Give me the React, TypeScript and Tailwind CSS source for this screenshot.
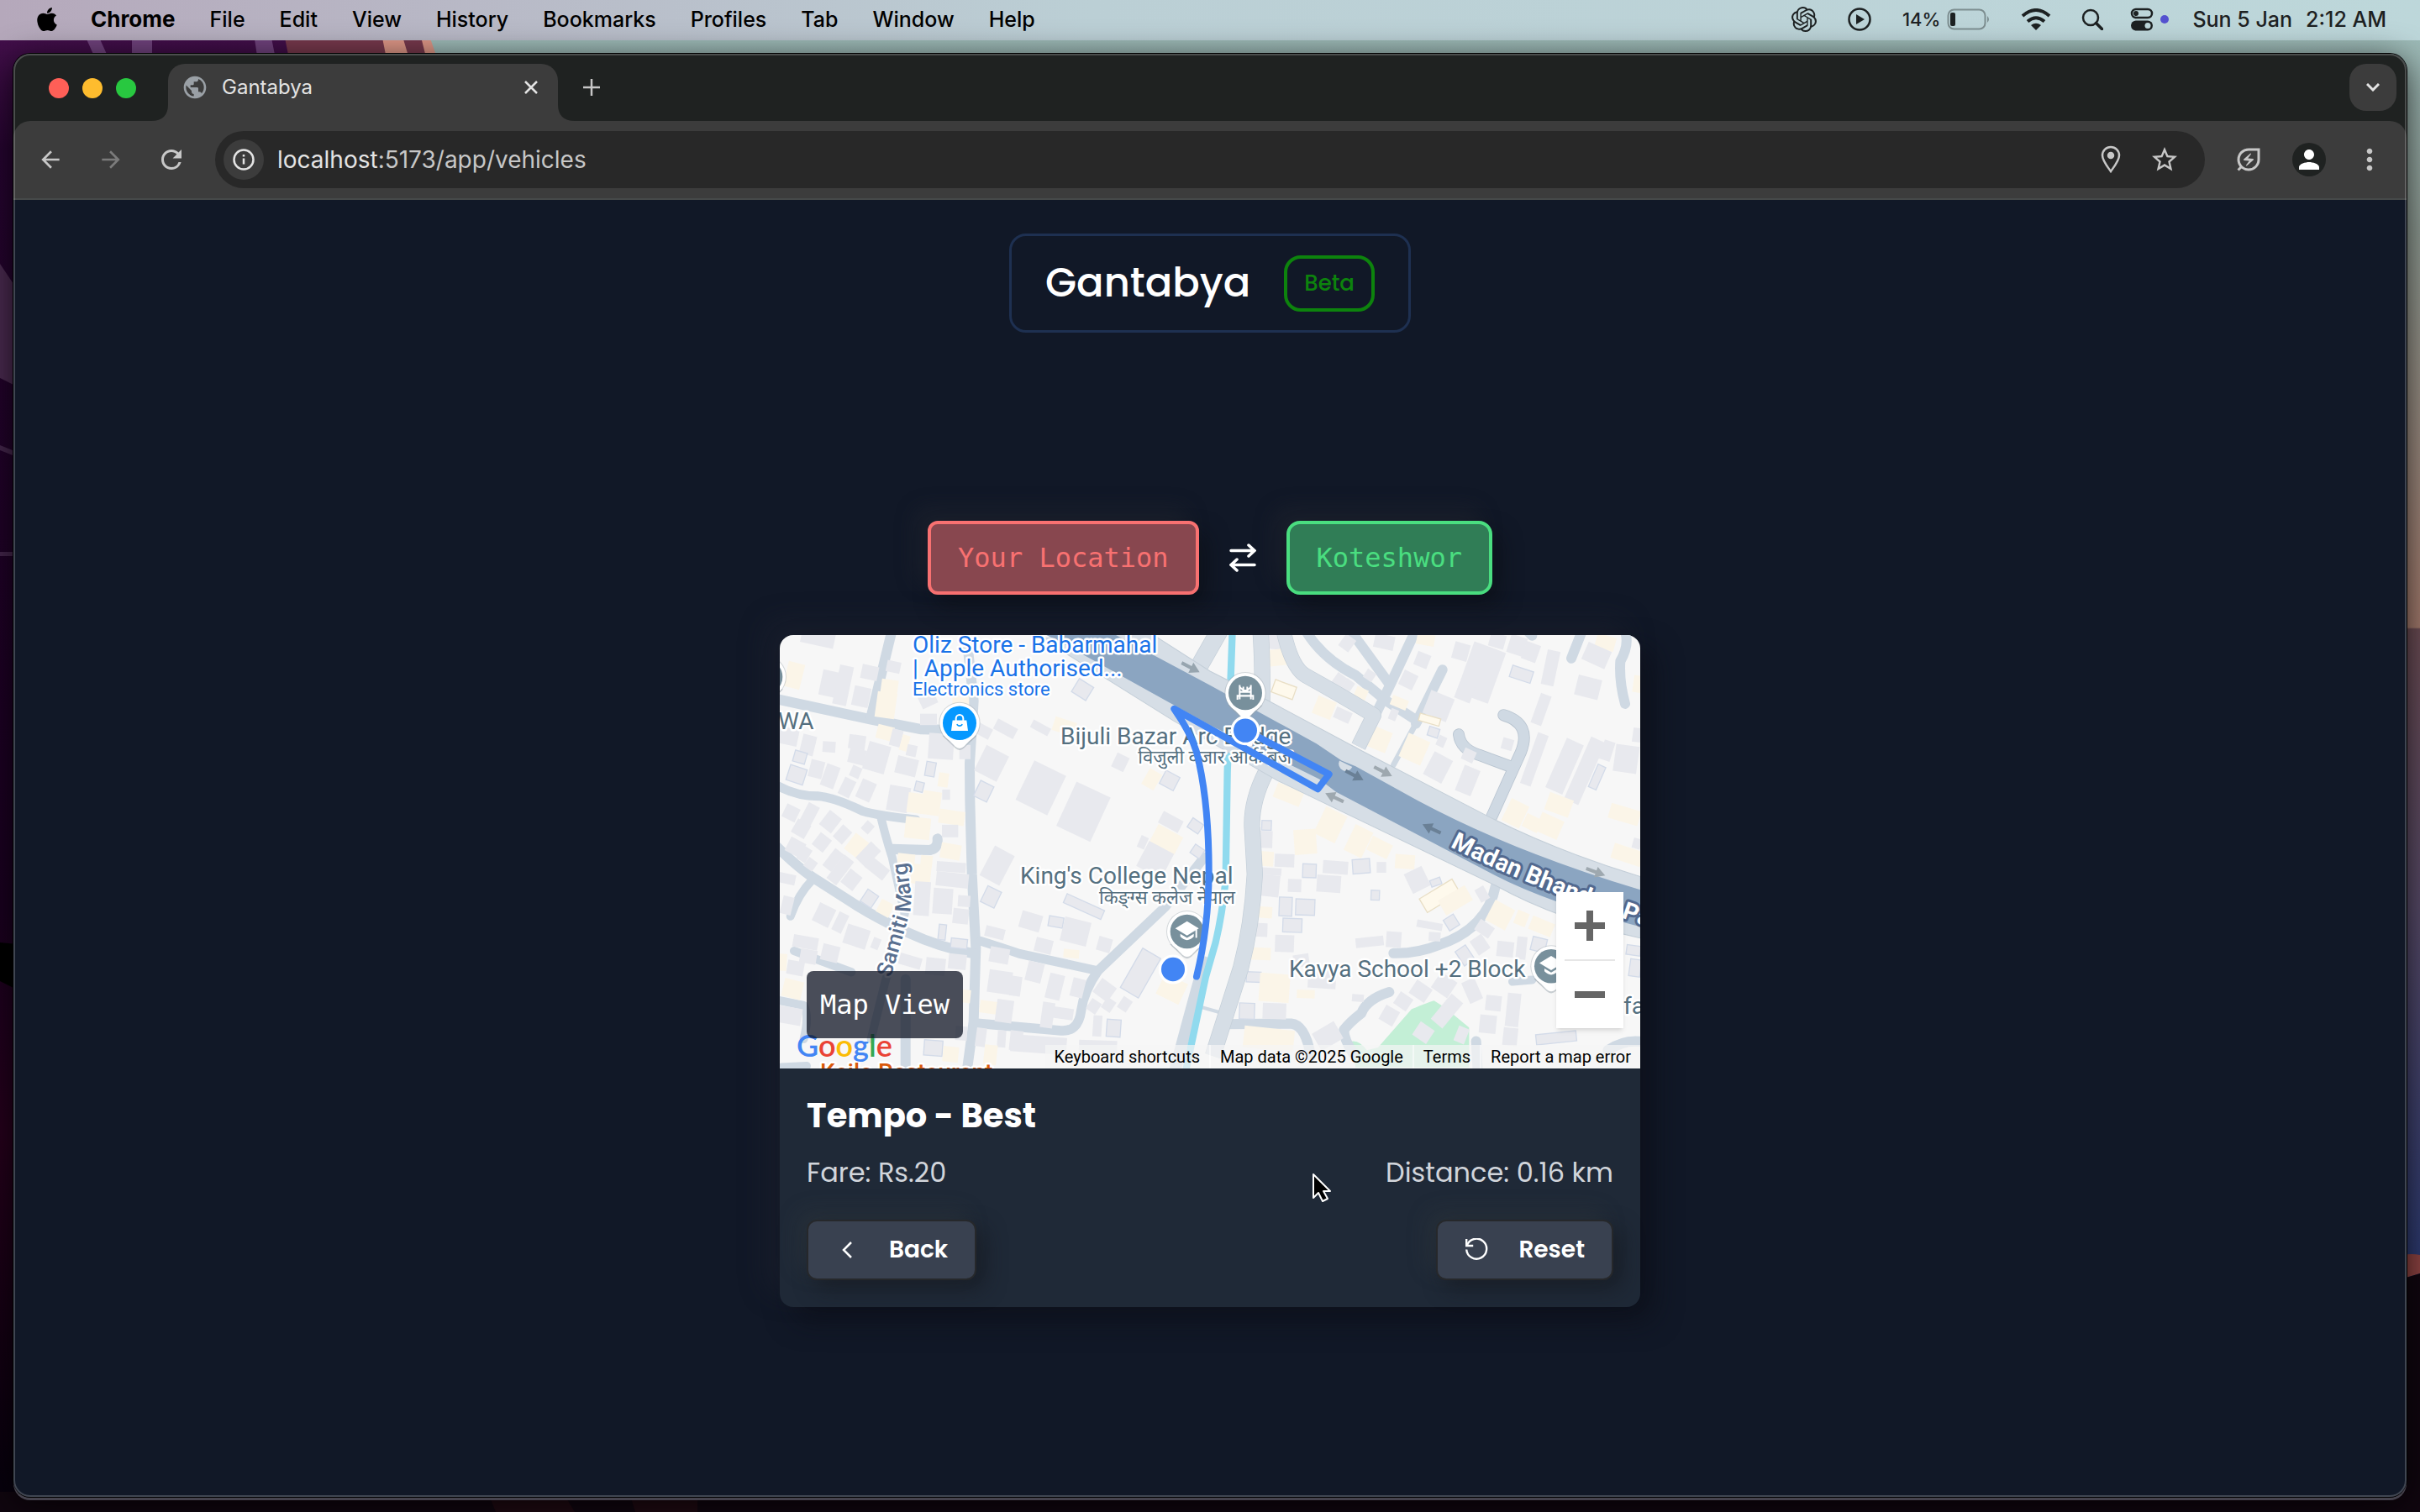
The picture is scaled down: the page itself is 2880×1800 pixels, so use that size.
import type { ReactNode } from 'react';
import { FaApple } from 'react-icons/fa';
import {
  MdArrowBack,
  MdArrowForward,
  MdMoreVert,
  MdOutlineEnergySavingsLeaf,
  MdPerson,
  MdPublic,
  MdRefresh,
  MdStarBorder,
} from 'react-icons/md';
import { SiOpenai } from 'react-icons/si';

const MENUS = ['File', 'Edit', 'View', 'History', 'Bookmarks', 'Profiles', 'Tab', 'Window', 'Help'];

// kind, centre x, centre y, width, height, rotation
type Building = ['g' | 'y' | 'o' | 'b', number, number, number, number, number];

const WEST: Building[] = [
  ['g', 160, 30, 120, 50, 12], ['g', 345, 150, 60, 50, 12], ['y', 75, 160, 60, 90, 14], ['g', 205, 190, 70, 90, 12],
  ['g', 250, 195, 50, 140, 12], ['g', 315, 235, 60, 70, 12], ['g', 430, 130, 50, 40, 12], ['y', 415, 205, 60, 60, 8],
  ['y', 403, 265, 70, 90, 8], ['g', 550, 240, 60, 60, -25], ['y', 670, 255, 60, 40, 0], ['g', 555, 315, 60, 40, 0],
  ['g', 600, 410, 90, 90, 4], ['g', 685, 430, 40, 50, 0], ['g', 750, 355, 60, 40, 28], ['g', 830, 348, 80, 40, 28],
  ['g', 955, 345, 70, 30, 28], ['y', 1040, 340, 80, 50, 18], ['o', 1105, 210, 60, 54, 32], ['g', 780, 470, 90, 100, 27],
  ['g', 55, 375, 70, 60, 12], ['g', 125, 405, 50, 70, 14], ['g', 200, 412, 46, 38, 4], ['y', 400, 362, 60, 50, 14],
  ['g', 440, 380, 40, 60, 14], ['y', 470, 398, 28, 56, 16], ['g', 300, 395, 60, 50, 8], ['g', 370, 450, 80, 100, 16],
  ['g', 300, 445, 60, 54, 14], ['g', 495, 425, 36, 40, 12], ['g', 477, 480, 76, 62, 14], ['o', 562, 490, 34, 50, 10],
  ['o', 522, 552, 30, 34, 14], ['o', 96, 448, 44, 40, 16], ['o', 84, 510, 62, 56, 18], ['g', 155, 490, 50, 62, 14],
  ['g', 204, 515, 50, 80, 20], ['g', 264, 555, 44, 64, 26], ['g', 295, 500, 36, 40, 24], ['g', 332, 565, 54, 70, 24],
  ['g', 448, 595, 76, 90, 10], ['y', 510, 610, 60, 70, 8], ['y', 565, 610, 66, 84, 8], ['g', 618, 580, 28, 36, 0],
  ['y', 608, 528, 36, 50, 8], ['y', 638, 660, 92, 50, 8], ['y', 516, 698, 90, 76, 6], ['g', 632, 708, 58, 44, 0],
  ['o', 752, 568, 52, 60, 26], ['g', 956, 556, 126, 154, 26], ['g', 1108, 640, 134, 172, 25], ['g', 1240, 466, 48, 54, 26],
  ['y', 1352, 526, 50, 64, 30], ['o', 1416, 530, 56, 52, 28], ['g', 1420, 676, 80, 46, 28], ['y', 1404, 738, 100, 70, 28],
  ['g', 1320, 748, 28, 44, 24], ['o', 1508, 690, 46, 38, 34], ['o', 1515, 780, 40, 36, 34], ['g', 1364, 810, 100, 100, 28],
  ['g', 800, 830, 80, 118, 28], ['o', 778, 940, 54, 62, 26], ['g', 64, 644, 52, 50, 26], ['g', 130, 650, 44, 76, 28],
  ['g', 100, 700, 54, 54, 30], ['g', 205, 675, 54, 64, 38], ['g', 248, 720, 44, 56, 42], ['g', 174, 748, 50, 54, 38],
  ['g', 338, 695, 34, 38, 42], ['y', 298, 760, 60, 70, 38], ['g', 80, 765, 60, 54, 28], ['g', 112, 790, 36, 52, 32],
  ['g', 134, 825, 38, 38, 36], ['g', 215, 810, 40, 76, 38], ['g', 240, 845, 44, 104, 38], ['g', 280, 880, 54, 60, 38],
  ['g', 340, 790, 50, 80, 44], ['g', 372, 840, 80, 46, 38], ['g', 50, 876, 60, 36, 12], ['g', 50, 970, 40, 64, 14],
  ['y', 474, 820, 62, 64, 6], ['y', 528, 860, 70, 70, 6], ['y', 548, 814, 42, 40, 6], ['y', 634, 780, 72, 54, 10],
  ['g', 636, 835, 104, 36, 4], ['g', 640, 880, 116, 50, 6], ['g', 606, 955, 70, 90, 4], ['g', 532, 946, 56, 120, 4],
  ['g', 682, 955, 44, 40, 4], ['g', 670, 1008, 56, 54, 6], ['o', 344, 946, 46, 50, 34], ['y', 400, 980, 50, 50, 28],
  ['g', 182, 1004, 64, 70, 26], ['g', 240, 1030, 38, 70, 26], ['g', 298, 1080, 84, 70, 18], ['g', 367, 1104, 28, 40, 22],
  ['g', 116, 1100, 90, 44, 10], ['g', 204, 1138, 62, 58, 14], ['g', 126, 1150, 60, 50, 10], ['g', 80, 1190, 60, 50, 10],
  ['o', 604, 1064, 26, 54, 6], ['o', 664, 1104, 58, 34, 6], ['g', 490, 1166, 80, 40, 16], ['g', 580, 1185, 70, 60, 6],
  ['g', 658, 1168, 64, 54, 6], ['y', 70, 1264, 70, 64, 14], ['g', 60, 1358, 84, 60, 10], ['g', 808, 1146, 70, 54, 10],
  ['g', 792, 1066, 70, 38, 14], ['g', 920, 1026, 76, 60, 16], ['o', 1010, 1028, 52, 36, 10], ['g', 1080, 1062, 96, 86, 14],
  ['o', 1110, 974, 146, 34, 24], ['g', 966, 1112, 62, 50, 14], ['g', 1183, 1108, 50, 50, 16], ['y', 1065, 1140, 56, 30, 6],
  ['g', 934, 1204, 58, 70, 14], ['g', 810, 1240, 84, 80, 8], ['g', 866, 1254, 40, 70, 8], ['g', 1006, 1256, 54, 90, 14],
  ['g', 1088, 1260, 46, 66, 14], ['y', 768, 1328, 60, 44, 8], ['g', 826, 1342, 60, 80, 8], ['g', 980, 1356, 44, 90, 8],
  ['g', 1036, 1350, 72, 40, 8], ['o', 1312, 1208, 74, 160, 30], ['g', 1184, 1268, 64, 60, 36], ['y', 1424, 1264, 90, 80, 26],
  ['g', 1145, 1325, 40, 44, 34], ['g', 1198, 1320, 38, 44, 34], ['g', 1256, 1318, 38, 46, 34], ['g', 1158, 1394, 32, 74, 4],
  ['o', 1216, 1402, 50, 60, 4], ['g', 742, 1434, 36, 66, 8], ['g', 816, 1440, 30, 60, 4], ['g', 868, 1446, 46, 70, 6],
  ['g', 948, 1460, 200, 60, 4], ['y', 776, 1496, 46, 70, 6], ['o', 572, 1472, 66, 54, 4], ['y', 634, 1494, 56, 54, 6],
  ['y', 690, 1290, 30, 46, 6], ['g', 672, 1420, 42, 50, 4], ['g', 1160, 1470, 136, 50, 2], ['y', 34, 1170, 30, 60, 4],
];

const EAST: Building[] = [
  ['g', 222, 42, 66, 50, 6], ['y', 232, 98, 78, 58, -6], ['b', 264, 210, 80, 46, 20], ['y', 408, 274, 70, 66, 22],
  ['g', 474, 300, 60, 40, 24], ['g', 460, 180, 40, 50, 36], ['g', 490, 200, 34, 50, 36], ['y', 538, 226, 44, 44, 24],
  ['g', 490, 46, 44, 50, 36], ['g', 622, 42, 72, 50, 12], ['y', 770, 34, 64, 40, 10], ['g', 758, 106, 50, 50, 22],
  ['g', 708, 176, 54, 56, 26], ['g', 570, 160, 36, 34, 34], ['y', 676, 256, 60, 36, 22], ['g', 655, 298, 28, 40, 22],
  ['g', 816, 268, 90, 86, 22], ['b', 784, 316, 76, 26, 16], ['o', 798, 360, 38, 32, 18], ['g', 826, 392, 30, 38, 24],
  ['g', 896, 76, 56, 60, 16], ['g', 968, 150, 120, 190, 20], ['g', 910, 220, 60, 60, 22], ['o', 1112, 156, 78, 42, 18],
  ['g', 1026, 38, 56, 50, 16], ['g', 1096, 54, 60, 66, 18], ['g', 1146, 78, 54, 64, 20], ['g', 1216, 134, 46, 124, 12],
  ['g', 1182, 280, 40, 110, 20], ['y', 1412, 44, 70, 50, 16], ['g', 1380, 90, 90, 66, 24], ['g', 1350, 202, 86, 72, 14],
  ['y', 1526, 190, 30, 60, 8], ['y', 606, 386, 70, 76, 22], ['y', 730, 420, 84, 90, 24], ['g', 814, 484, 74, 90, 28],
  ['g', 920, 530, 60, 96, 22], ['g', 924, 442, 44, 42, 24], ['g', 1062, 402, 40, 40, 16], ['g', 1158, 456, 40, 190, 20],
  ['g', 1266, 480, 66, 190, 24], ['g', 1338, 496, 56, 240, 24], ['g', 1418, 425, 40, 70, 18], ['o', 1382, 518, 30, 86, 24],
  ['g', 1486, 454, 84, 96, 8], ['g', 1524, 370, 30, 50, 8], ['y', 1246, 616, 90, 64, 20], ['y', 1090, 646, 70, 86, 26],
  ['y', 1150, 680, 60, 50, 26], ['y', 1212, 690, 86, 70, 24], ['y', 1480, 650, 110, 54, 16], ['y', 1490, 792, 110, 54, 18],
  ['g', 1524, 752, 30, 36, 16], ['y', 280, 580, 100, 54, 22], ['y', 430, 686, 84, 104, 26], ['y', 340, 746, 80, 88, -4],
  ['y', 530, 744, 70, 100, 26], ['y', 606, 766, 80, 54, 26], ['o', 202, 688, 34, 34, 2], ['g', 200, 738, 46, 60, 2],
  ['y', 200, 806, 54, 52, 4], ['g', 266, 812, 70, 46, 2], ['o', 355, 848, 48, 48, 2], ['g', 448, 836, 90, 46, 4],
  ['o', 540, 832, 62, 50, -4], ['g', 612, 836, 34, 38, 0], ['y', 696, 816, 70, 50, 4], ['g', 210, 850, 90, 26, 4],
  ['g', 206, 900, 84, 76, 6], ['g', 302, 900, 48, 46, 2], ['g', 424, 894, 86, 60, 4], ['o', 590, 934, 30, 34, 2],
  ['g', 740, 880, 70, 76, -26], ['o', 806, 888, 38, 24, -20], ['b', 820, 936, 136, 56, -31], ['y', 876, 952, 110, 60, -30],
  ['g', 972, 930, 36, 50, -30], ['o', 270, 974, 46, 66, 2], ['o', 340, 976, 68, 56, 2], ['o', 294, 1040, 68, 48, 2],
  ['y', 190, 994, 64, 40, 4], ['g', 180, 1056, 50, 48, 2], ['g', 266, 1104, 68, 60, 2], ['y', 174, 1140, 86, 44, 2],
  ['g', 784, 1040, 92, 26, 10], ['o', 862, 1030, 42, 44, -32], ['g', 570, 1098, 100, 34, -6], ['g', 656, 1090, 54, 56, 4],
  ['g', 802, 1080, 42, 32, 4], ['y', 1036, 1004, 80, 80, 28], ['y', 1112, 1016, 44, 50, 22], ['y', 1184, 1044, 84, 50, 22],
  ['g', 980, 1052, 60, 44, 34], ['g', 964, 1108, 50, 60, -34], ['g', 1054, 1124, 60, 54, 6], ['g', 1112, 1120, 36, 80, 6],
  ['o', 1174, 1108, 52, 48, 14], ['o', 1512, 1128, 50, 34, 8], ['o', 1518, 1190, 40, 60, 8], ['o', 910, 1146, 44, 60, -34],
  ['o', 156, 1222, 52, 36, 2], ['y', 230, 1260, 108, 100, 4], ['y', 342, 1282, 64, 30, 2], ['g', 400, 1230, 100, 64, 4],
  ['g', 528, 1296, 42, 26, 4], ['o', 132, 1342, 54, 56, 2], ['g', 230, 1342, 84, 56, 2], ['y', 210, 1440, 180, 76, 6],
  ['g', 420, 1430, 90, 70, -30], ['g', 326, 1164, 56, 44, -8], ['g', 752, 1272, 66, 56, 34], ['g', 836, 1250, 70, 66, 34],
  ['g', 690, 1308, 54, 50, 34], ['g', 640, 1358, 56, 58, 30], ['g', 936, 1270, 50, 80, -24], ['g', 1012, 1314, 56, 54, 6],
  ['g', 992, 1388, 60, 64, 6], ['g', 1082, 1338, 48, 118, 6], ['g', 1072, 1432, 52, 62, 6], ['o', 1236, 1436, 144, 36, -6],
];

const PARK_HOUSES: Building[] = [
  ['g', 846, 1342, 54, 116, 40], ['g', 762, 1418, 60, 56, 34], ['g', 898, 1426, 40, 56, 22],
];

const FILLS = { g: '#e8e9ee', y: '#fbf5e8', o: '#e8e9ee', b: '#fef9ec' };
const STROKES = { g: 'none', y: 'none', o: '#d3dbe9', b: '#e9dfc6' };

function Buildings({ items }: { items: Building[] }) {
  return (
    <g strokeWidth="4">
      {items.map(([kind, x, y, w, h, r]) => (
        <rect
          key={`${x}-${y}`}
          x={x - w / 2}
          y={y - h / 2}
          width={w}
          height={h}
          fill={FILLS[kind]}
          stroke={STROKES[kind]}
          transform={`rotate(${r} ${x} ${y})`}
        />
      ))}
    </g>
  );
}

function Pin({ x, y, color, children }: { x: number; y: number; color: string; children?: ReactNode }) {
  return (
    <g transform={`translate(${x} ${y})`}>
      <path d="M-62 44L-16 88Q0 102 16 88L62 44Z" fill="#9aa5ad" opacity=".5" />
      <circle r="74" fill="#9aa5ad" opacity=".4" />
      <path d="M-60 38L-16 82Q0 96 16 82L60 38Z" fill="#fff" />
      <circle r="71" fill="#fff" />
      <circle r="60" fill={color} />
      {children}
    </g>
  );
}

function Arrow({ x, y, r, color }: { x: number; y: number; r: number; color: string }) {
  return (
    <path
      d="M-35 -6H2V-20L37 0L2 20V6H-35Z"
      fill={color}
      transform={`translate(${x} ${y}) rotate(${r})`}
    />
  );
}

function GradCap() {
  return (
    <g>
      <path d="M0 -36L42 -11L0 14L-42 -11Z" fill="#fff" />
      <path d="M-24 8L0 22L24 8V18Q0 42 -24 18Z" fill="#fff" />
      <path d="M33 -8V22" stroke="#fff" strokeWidth="6" />
    </g>
  );
}

function MapCanvas() {
  return (
    <svg viewBox="0 0 1024 516" className="block w-full" role="img" aria-label="Route map">
      <rect width="1024" height="516" fill="#f7f7f7" />
      <svg width="1024" height="516" viewBox="24 18 3072 1526" preserveAspectRatio="none">
        <g fill="none" stroke="#cfd9e3" strokeLinecap="round" strokeLinejoin="round" strokeWidth="36">
          <path d="M10 243L350 315L530 350L620 352" />
          <path d="M425 0L350 305" />
          <path d="M695 60L716 250L702 470L703 600L710 860L724 1120L716 1380L690 1568" />
          <path d="M10 545Q80 585 160 585Q220 590 320 638Q380 655 510 668" strokeWidth="32" />
          <path d="M385 660Q405 740 425 800L470 1000L400 1240L350 1440" strokeWidth="30" />
          <path d="M425 772L560 775Q590 768 587 735" />
          <path d="M0 750Q80 830 140 870L290 965Q380 1020 480 1065Q600 1120 720 1140" />
          <path d="M140 880Q90 930 62 1008" strokeWidth="30" />
          <path d="M740 1095Q820 1120 880 1140L1160 1200" strokeWidth="32" />
          <path d="M1540 800L1400 975L1160 1200Q1110 1270 1100 1340Q1090 1420 1020 1410L730 1385" strokeWidth="34" />
          <path d="M75 1130L280 1205" strokeWidth="30" />
          <path d="M0 1300L110 1322Q130 1360 110 1440" strokeWidth="30" />
          <path d="M473 1230V1560" />
          <path d="M30 1540L120 1535" strokeWidth="30" />
          <path d="M1540 1170Q1480 1380 1430 1570" strokeWidth="42" />
          <path d="M1500 1320L1590 1345" strokeWidth="12" />
        </g>
        <g transform="translate(1560 0)">
          <path d="M500 1450Q530 1440 560 1480L600 1470L720 1335Q780 1310 800 1305L840 1330L925 1400V1540H520Z" fill="#c3efd6" />
          <g fill="none" stroke="#cfd9e3" strokeLinecap="round" strokeLinejoin="round" strokeWidth="36">
            <path d="M340 0Q400 100 520 160L630 250L740 320" />
            <path d="M500 0L640 190" />
            <path d="M735 0L640 200L590 300" />
            <path d="M830 140L735 330" />
            <path d="M735 330L655 475" strokeWidth="20" />
            <path d="M1330 0L1290 100" />
            <path d="M1130 0L1150 20" />
            <path d="M1480 0Q1500 50 1465 110Q1460 180 1482 260" />
            <path d="M1020 900Q990 1050 820 1108Q740 1140 655 1138" />
            <path d="M640 1275Q560 1300 540 1350Q500 1380 478 1408Q478 1440 510 1490" />
            <path d="M50 1388L290 1386Q340 1390 360 1500" />
            <path d="M1080 1238L1150 1232" strokeWidth="30" />
            <path d="M950 1448L955 1540" />
            <path d="M1420 1480Q1480 1440 1545 1450" />
          </g>
          <g fill="none" stroke="#b9c5d1" strokeLinecap="round" strokeLinejoin="round" strokeWidth="42">
            <path d="M1048 300Q1150 330 1110 430L1000 670" />
            <path d="M888 368Q895 420 960 440L1070 480" />
          </g>
          <g fill="none" stroke="#cfd9e3" strokeLinecap="round" strokeLinejoin="round" strokeWidth="37">
            <path d="M1048 300Q1150 330 1110 430L1000 670" />
            <path d="M888 368Q895 420 960 440L1070 480" />
          </g>
        </g>
        <Buildings items={WEST} />
        <g transform="translate(1560 0)">
          <Buildings items={EAST} />
          <Buildings items={PARK_HOUSES} />
        </g>
        <path d="M1640 0L1622 500L1616 880Q1604 1000 1580 1100L1545 1220L1470 1568" fill="none" stroke="#90daee" strokeWidth="25" />
        <g transform="translate(1560 0)" fill="none" strokeLinejoin="round">
          <g stroke="#c3ced8">
            <path d="M35 0L-40 130" strokeWidth="64" />
            <path d="M180 0Q190 130 185 300" strokeWidth="58" />
            <path d="M262 0Q290 130 340 160Q450 220 585 300L530 410" strokeWidth="54" />
            <path d="M200 500Q148 600 150 690L160 860Q150 1040 110 1190L10 1500" strokeWidth="58" />
          </g>
          <g stroke="#d6dee6">
            <path d="M35 0L-40 130" strokeWidth="60" />
            <path d="M180 0Q190 130 185 300" strokeWidth="54" />
            <path d="M262 0Q290 130 340 160Q450 220 585 300L530 410" strokeWidth="50" />
            <path d="M200 500Q148 600 150 690L160 860Q150 1040 110 1190L10 1500" strokeWidth="54" />
          </g>
        </g>
        <path
          d="M960 30L1330 0L1560 145L1770 250L2110 430L2550 655Q2800 780 3096 868V1085Q2800 1020 2580 900L1800 530L1430 320Z"
          fill="#d6dee6"
          stroke="#c3ced8"
          strokeWidth="3"
        />
        <path
          d="M940 0L1190 0L1560 195L1940 400L2030 460L2080 480L2300 600Q2640 780 3096 915V1045Q2760 960 2560 855L2010 570L1950 525L1560 335L1040 50Z"
          fill="#8ba5c1"
        />
        <path d="M2022 460A24 24 0 0 0 2068 482Z" fill="#d6dee6" />
        <Arrow x={1490} y={132} r={27} color="#97a5af" />
        <Arrow x={2075} y={512} r={27} color="#6a8096" />
        <Arrow x={2177} y={498} r={27} color="#9ea8af" />
        <Arrow x={2005} y={590} r={205} color="#9ea8af" />
        <Arrow x={2352} y={700} r={205} color="#6a8096" />
        <Arrow x={2936} y={852} r={20} color="#9ea8af" />
      </svg>

      <g
        fontFamily="Roboto, 'Noto Sans', sans-serif"
        fontSize="28"
        fill="#557080"
        stroke="#fff"
        strokeWidth="5"
        strokeLinejoin="round"
        paintOrder="stroke"
      >
        <g fill="#1a73e8">
          <text x="158" y="21">Oliz Store - Babarmahal</text>
          <text x="158" y="49">| Apple Authorised...</text>
          <text x="158" y="72" fontSize="22">Electronics store</text>
        </g>
        <text x="-2" y="112">WA</text>
        <text x="334" y="130">Bijuli Bazar Arc Bridge</text>
        <text x="609" y="153" fontSize="22" textAnchor="end">विजुली वजार आर्क ब्रज</text>
        <text x="286" y="296">King's College Nepal</text>
        <text x="542" y="320" fontSize="22" textAnchor="end">किङ्ग्स कलेज नेपाल</text>
        <text x="606" y="407">Kavya School +2 Block</text>
        <text x="1004" y="451">fa</text>
        <text x="48" y="530" fill="#d9590b" fontWeight="500">Kaile Restaurant</text>
        <path id="samiti" d="M132 408L152 340Q159 318 155 300L148 250" fill="none" stroke="none" />
        <text fontSize="26" fontWeight="500" fill="#5a7090">
          <textPath href="#samiti">Samiti Marg</textPath>
        </text>
        <path id="madan" d="M798 252Q900 306 1120 376" fill="none" stroke="none" />
        <text fontSize="29" fontWeight="700" fill="#fff" stroke="#52698f" strokeWidth="6">
          <textPath href="#madan">Madan Bhandari Path</textPath>
        </text>
      </g>

      <svg width="1024" height="516" viewBox="24 18 3072 1526" preserveAspectRatio="none">
        <Pin x={-26} y={165} color="#78909c" />
        <Pin x={666} y={328} color="#0598ff">
          <path d="M-25 -10H25L30 27H-30Z" fill="#fff" />
          <path d="M-13 -8V-16A13 13 0 0 1 13 -16V-8" fill="none" stroke="#fff" strokeWidth="6" />
          <path d="M-10 4Q0 16 10 4" fill="none" stroke="#0598ff" strokeWidth="5" />
        </Pin>
        <Pin x={1478} y={1062} color="#78909c"><GradCap /></Pin>
        <Pin x={2778} y={1184} color="#78909c"><GradCap /></Pin>
        <Pin x={1686} y={222} color="#78909c">
          <path
            d="M-20 -28V22M20 -28V22M-7 -22V-6M7 -22V-6M-20 -4H20M-31 10H31M-28 10V24M28 10V24M-20 -22Q0 4 20 -22"
            fill="none"
            stroke="#fff"
            strokeWidth="6"
          />
        </Pin>
        <path
          d="M1512 1220Q1555 1050 1556 850Q1556 600 1512 430Q1490 360 1432 278L1945 560L1985 508L1690 355"
          fill="none"
          stroke="#4285f4"
          strokeWidth="24"
          strokeLinecap="round"
          strokeLinejoin="round"
        />
        <circle cx="1428" cy="1195" r="47" fill="#4285f4" stroke="#fff" strokeWidth="10" />
        <circle cx="1686" cy="354" r="47" fill="#4285f4" stroke="#fff" strokeWidth="10" />
      </svg>
    </svg>
  );
}

function GoogleLogo() {
  return (
    <span className="absolute bottom-1 left-5 font-[Lato,sans-serif] text-[36px] leading-[48px] font-semibold text-[#4285f4]">
      G<span className="text-[#ea4335]">o</span><span className="text-[#fbbc05]">o</span>g
      <span className="text-[#34a853]">l</span><span className="text-[#ea4335]">e</span>
    </span>
  );
}

function RouteMap() {
  return (
    <div className="relative overflow-hidden rounded-t-2xl">
      <MapCanvas />
      <GoogleLogo />
      <div className="absolute bottom-9 left-8 rounded-lg bg-[#0f1424]/75 px-4 py-4 font-['DejaVu_Sans_Mono',monospace] text-[32px] leading-[48px] text-white">
        Map View
      </div>
      <div className="absolute right-5 bottom-12 flex w-20 flex-col items-center bg-white shadow-md">
        <button type="button" aria-label="Zoom in" className="flex h-20 w-full items-center justify-center">
          <svg viewBox="0 0 36 36" className="size-9" fill="#666">
            <path d="M14 0h8v14h14v8H22v14h-8V22H0v-8h14z" />
          </svg>
        </button>
        <div className="h-0.5 w-[60px] bg-[#e6e6e6]" />
        <button type="button" aria-label="Zoom out" className="flex h-20 w-full items-center justify-center">
          <svg viewBox="0 0 36 36" className="size-9" fill="#666">
            <path d="M0 14h36v8H0z" />
          </svg>
        </button>
      </div>
      <div className="absolute right-0 bottom-0 flex h-7 items-center divide-x-2 divide-white/50 bg-[#f5f5f5]/70 font-[Roboto,sans-serif] text-[20px] leading-7 text-black">
        <button type="button" className="px-[11px]">Keyboard shortcuts</button>
        <span className="px-[11px]">Map data ©2025 Google</span>
        <a href="#terms" className="px-[11px]">Terms</a>
        <a href="#report" className="px-[11px]">Report a map error</a>
      </div>
    </div>
  );
}

function ActionButton({ icon, label }: { icon: ReactNode; label: string }) {
  return (
    <button
      type="button"
      className="flex h-[72px] items-center gap-9 rounded-xl border-2 border-[#26282b] bg-[#394150] px-8 text-[28px] leading-9 font-semibold text-white shadow-[10px_10px_24px_rgba(20,24,30,0.6),-10px_-10px_24px_rgba(60,66,66,0.3)]"
    >
      {icon}
      {label}
    </button>
  );
}

function VehicleCard() {
  return (
    <section className="w-full max-w-[1024px] rounded-2xl bg-[#1f2937] shadow-[16px_16px_32px_rgba(12,14,22,0.6),-16px_-16px_32px_rgba(36,38,50,0.4)]">
      <RouteMap />
      <div className="px-8 pt-8 pb-8">
        <h2 className="text-[40px] leading-[48px] font-bold text-white">Tempo - Best</h2>
        <div className="mt-4 flex justify-between text-[32px] leading-[56px] text-[#d1d5db]">
          <p>Fare: Rs.20</p>
          <p>Distance: 0.16 km</p>
        </div>
        <div className="mt-7 flex justify-between">
          <ActionButton
            label="Back"
            icon={
              <svg viewBox="0 0 28 28" className="size-7" fill="none" stroke="currentColor" strokeWidth="2.5">
                <path d="M19 5l-9 9 9 9" />
              </svg>
            }
          />
          <ActionButton
            label="Reset"
            icon={
              <svg viewBox="0 0 28 28" className="size-7" fill="none" stroke="currentColor" strokeWidth="2.4">
                <path d="M2.200 1v8h8" />
                <path d="M2.800 8.800A12 12 0 1 1 2.200 13.500" />
              </svg>
            }
          />
        </div>
      </div>
    </section>
  );
}

function Wallpaper() {
  return (
    <svg
      className="absolute inset-0 h-full w-full"
      viewBox="0 0 2880 1800"
      preserveAspectRatio="none"
      aria-hidden="true"
    >
      <defs>
        <linearGradient id="sky" x1="0" y1="0" x2="0" y2="1">
          <stop offset="0" stopColor="#9fc0be" />
          <stop offset="0.15" stopColor="#8f9c94" />
          <stop offset="0.415" stopColor="#a37a6c" />
          <stop offset="0.416" stopColor="#6b4c54" />
          <stop offset="0.6" stopColor="#574a68" />
          <stop offset="0.83" stopColor="#2d3a70" />
        </linearGradient>
        <linearGradient id="dusk" x1="0" y1="0" x2="0" y2="1">
          <stop offset="0" stopColor="#4c1253" />
          <stop offset="0.1" stopColor="#260430" />
          <stop offset="0.6" stopColor="#1a0020" />
          <stop offset="0.75" stopColor="#26001c" />
          <stop offset="1" stopColor="#05000c" />
        </linearGradient>
      </defs>
      <rect width="2880" height="1800" fill="url(#sky)" />
      <path d="M0 0H340L380 200V1800H0Z" fill="url(#dusk)" />
      <path d="M330 0H500L540 200H370Z" fill="#76384c" />
      <path d="M454 40H478L490 80H462ZM500 40H510L524 80H510Z" fill="#dd9686" />
      <path d="M100 40L118 80H134L116 40ZM157 40H181V80H157ZM302 40H322L330 80H308Z" fill="#6f417c" />
      <path d="M0 314L20 344V460L0 450Z" fill="#4a2a50" />
      <path d="M0 530L20 538V544L0 536ZM0 657H20V662H0Z" fill="#44264c" />
      <path d="M0 1122L20 1124V1178L0 1168Z" fill="#000" />
      <path d="M2860 1494Q2870 1492 2880 1494V1516L2860 1522Z" fill="#8e4342" />
      <path d="M2860 1522L2880 1516V1800H0V1776H2860Z" fill="#10060f" />
      <path d="M582 1780H672L684 1800H590ZM750 1780H830V1800H756Z" fill="#1f0a12" />
    </svg>
  );
}

function MenuBar() {
  return (
    <header className="relative flex h-12 shrink-0 items-center justify-between bg-linear-to-r from-[#b5a8bb] via-[#bbcfd5] via-45% to-[#bdd7da] px-10 pb-0.5 text-[25px] leading-8 text-black">
      <nav className="flex items-center gap-[41px] font-medium">
        <div className="flex items-center gap-9">
          <FaApple className="size-8" />
          <span className="text-[26px] font-bold">Chrome</span>
        </div>
        {MENUS.map((menu) => (
          <span key={menu}>{menu}</span>
        ))}
      </nav>
      <div className="flex items-center font-medium text-[#1d2122]">
        <SiOpenai className="size-[30px]" />
        <svg viewBox="0 0 30 30" className="ml-9 size-[30px]">
          <circle cx="15" cy="15" r="12.500" fill="none" stroke="currentColor" strokeWidth="2.500" />
          <path d="M11 9l10 6-10 6z" fill="currentColor" />
        </svg>
        <span className="ml-9 text-[22px]">14%</span>
        <svg viewBox="0 0 52 26" className="ml-2 h-[26px] w-[52px]">
          <rect x="1.500" y="1.500" width="44" height="23" rx="7" fill="none" stroke="#7d8e90" strokeWidth="2" />
          <rect x="4" y="5" width="6" height="16" rx="2" fill="currentColor" />
          <path d="M48 9q4 4 0 8z" fill="#7d8e90" />
        </svg>
        <svg viewBox="0 0 36 26" className="ml-9 h-[26px] w-9">
          <path d="M2 9Q18-5 34 9M8 15.500Q18 7 28 15.500" fill="none" stroke="currentColor" strokeWidth="4" />
          <path d="M12 20Q18 15.500 24 20L18 26z" fill="currentColor" />
        </svg>
        <svg viewBox="0 0 26 26" className="ml-9 size-[26px]" fill="none" stroke="currentColor">
          <circle cx="11" cy="11" r="9" strokeWidth="2.500" />
          <path d="M17.500 17.500l7 7" strokeWidth="3.500" strokeLinecap="round" />
        </svg>
        <svg viewBox="0 0 28 28" className="ml-8 size-7">
          <rect x="2" y="2" width="24" height="10" rx="5" fill="none" stroke="currentColor" strokeWidth="2.500" />
          <circle cx="7" cy="7" r="3" fill="currentColor" />
          <rect x="1" y="15.500" width="26" height="12" rx="6" fill="currentColor" />
          <circle cx="21" cy="21.500" r="3.500" fill="#bdd7da" />
        </svg>
        <span className="ml-2 size-2.5 rounded-full bg-[#5552d0]" />
        <span className="ml-7">Sun 5 Jan</span>
        <span className="ml-4">2:12 AM</span>
      </div>
    </header>
  );
}

function TabStrip() {
  return (
    <div className="flex h-20 items-end bg-[#1f2221] pr-3 pl-[42px]">
      <div className="flex h-[78px] items-center gap-4">
        <span className="size-6 rounded-full bg-[#ff5f57]" />
        <span className="size-6 rounded-full bg-[#febc2e]" />
        <span className="size-6 rounded-full bg-[#28c840]" />
      </div>
      <svg viewBox="0 0 20 20" className="ml-[18px] size-5" fill="#3c3c3c">
        <path d="M20 0v20H0Q20 20 20 0z" />
      </svg>
      <div className="flex h-[68px] w-[464px] items-center rounded-t-[20px] bg-[#3c3c3c] px-4 pb-3 text-[#e3e3e3]">
        <MdPublic className="size-8 text-[#9aa0a6]" />
        <span className="ml-4 flex-1 text-[24px] leading-8">Gantabya</span>
        <button type="button" aria-label="Close tab" className="mr-2">
          <svg viewBox="0 0 16 16" className="size-4" stroke="currentColor" strokeWidth="2.500">
            <path d="M1 1l14 14M15 1L1 15" />
          </svg>
        </button>
      </div>
      <svg viewBox="0 0 20 20" className="size-5" fill="#3c3c3c">
        <path d="M0 0v20h20Q0 20 0 0z" />
      </svg>
      <button type="button" aria-label="New tab" className="mb-[30px] ml-2.5 text-[#c7c7c7]">
        <svg viewBox="0 0 20 20" className="size-5" stroke="currentColor" strokeWidth="2.500">
          <path d="M10 0v20M0 10h20" />
        </svg>
      </button>
      <button
        type="button"
        aria-label="Search tabs"
        className="mb-3 ml-auto flex size-14 items-center justify-center rounded-[20px] bg-[#3c3c3c] text-[#e3e3e3]"
      >
        <svg viewBox="0 0 16 10" className="h-2.5 w-4" fill="none" stroke="currentColor" strokeWidth="3">
          <path d="M1 1l7 7 7-7" />
        </svg>
      </button>
    </div>
  );
}

function Toolbar() {
  return (
    <div className="bg-[#1f2221]">
      <div className="flex h-[94px] items-center rounded-t-[20px] border-b-2 border-[#464949] bg-[#3c3c3c] pr-6 pl-7 text-[#c7c7c7]">
        <button type="button" aria-label="Back"><MdArrowBack className="size-8" /></button>
        <button type="button" aria-label="Forward" className="ml-10 text-[#7b7b7b]"><MdArrowForward className="size-8" /></button>
        <button type="button" aria-label="Reload" className="ml-[38px]"><MdRefresh className="size-9" /></button>
        <div className="mr-[34px] ml-[34px] flex h-[68px] flex-1 items-center rounded-full bg-[#282828] pr-[30px] pl-2.5">
          <span className="flex size-12 items-center justify-center rounded-full bg-[#3c3c3c]">
            <svg viewBox="0 0 26 26" className="size-[26px]" fill="none" stroke="#e3e3e3" strokeWidth="2.500">
              <circle cx="13" cy="13" r="11.500" />
              <path d="M13 11.500v7M13 7v2.500" />
            </svg>
          </span>
          <p className="ml-4 flex-1 text-[28px] leading-9">
            <span className="text-[#e3e3e3]">localhost</span>:5173/app/vehicles
          </p>
          <svg viewBox="0 0 24 34" className="h-[34px] w-6" fill="none" stroke="currentColor" strokeWidth="2.500">
            <path d="M12 31C7 24 2 18 2 12A10 10 0 0 1 22 12C22 18 17 24 12 31Z" />
            <circle cx="12" cy="12" r="3" fill="currentColor" />
          </svg>
          <button type="button" aria-label="Bookmark" className="ml-[34px]"><MdStarBorder className="size-9" /></button>
        </div>
        <MdOutlineEnergySavingsLeaf className="size-9" />
        <span className="ml-[34px] flex size-10 items-center justify-center rounded-full bg-[#1f2221] text-white">
          <MdPerson className="size-9" />
        </span>
        <button type="button" aria-label="Menu" className="ml-8"><MdMoreVert className="size-10" /></button>
      </div>
    </div>
  );
}

function Page() {
  return (
    <div className="flex flex-1 flex-col items-center font-[Poppins,Inter,sans-serif]">
      <header className="mt-10 flex h-[118px] items-center gap-10 rounded-[20px] border-[3px] border-[#1e3051] px-10">
        <h1 className="text-[48px] leading-[64px] font-medium text-white">Gantabya</h1>
        <span className="flex h-[67px] items-center rounded-[20px] border-4 border-[#0d830d] px-5 text-[26px] leading-8 font-medium text-[#0d830d]">
          Beta
        </span>
      </header>
      <main className="flex w-full flex-1 flex-col items-center justify-center pb-0.5">
        <div className="mb-12 flex items-center gap-9 font-['DejaVu_Sans_Mono',monospace] text-[32px] leading-10">
          <button
            type="button"
            className="h-[88px] rounded-xl border-4 border-[#f87171] bg-[#88474f] px-8 text-[#f87171] shadow-[10px_14px_24px_rgba(12,14,18,0.5),-14px_-14px_24px_rgba(40,42,50,0.4)]"
          >
            Your Location
          </button>
          <button type="button" aria-label="Swap" className="text-white">
            <svg viewBox="0 0 32 34" className="h-[34px] w-8" fill="none" stroke="currentColor" strokeWidth="3.5" strokeLinecap="round">
              <path d="M2 8.500h28M23 2l7 6.500-7 6.500M30 25.500H2M9 19l-7 6.500L9 32" />
            </svg>
          </button>
          <button
            type="button"
            className="h-[88px] rounded-2xl border-4 border-[#4ade80] bg-[#307d56] px-8 text-[#4ade80] shadow-[10px_14px_24px_rgba(12,14,18,0.5),-14px_-14px_24px_rgba(40,42,50,0.4)]"
          >
            Koteshwor
          </button>
        </div>
        <VehicleCard />
      </main>
    </div>
  );
}

function Cursor() {
  return (
    <svg viewBox="0 0 24 36" className="absolute top-[1396px] left-[54.200%] h-9 w-6" aria-hidden="true">
      <path d="M2 2v28l6-6 5 10 6-3-5-9h8z" fill="#000" stroke="#fff" strokeWidth="2" strokeLinejoin="round" />
    </svg>
  );
}

export default function App() {
  return (
    <div className="relative flex min-h-screen flex-col overflow-hidden bg-black font-[Inter,sans-serif]">
      <Wallpaper />
      <MenuBar />
      <div className="relative mx-4 mt-4 mb-[18px] flex flex-1 flex-col rounded-[20px] shadow-[0_1px_0_#000,0_4px_0_#46434e,0_0_0_1px_#000,0_8px_40px_rgba(0,0,0,0.75)]">
        <div className="flex flex-1 flex-col overflow-hidden rounded-[20px] bg-[#111827]">
          <TabStrip />
          <Toolbar />
          <Page />
        </div>
        <div className="pointer-events-none absolute inset-0 rounded-[20px] border-2 border-white/20" />
      </div>
      <Cursor />
    </div>
  );
}
